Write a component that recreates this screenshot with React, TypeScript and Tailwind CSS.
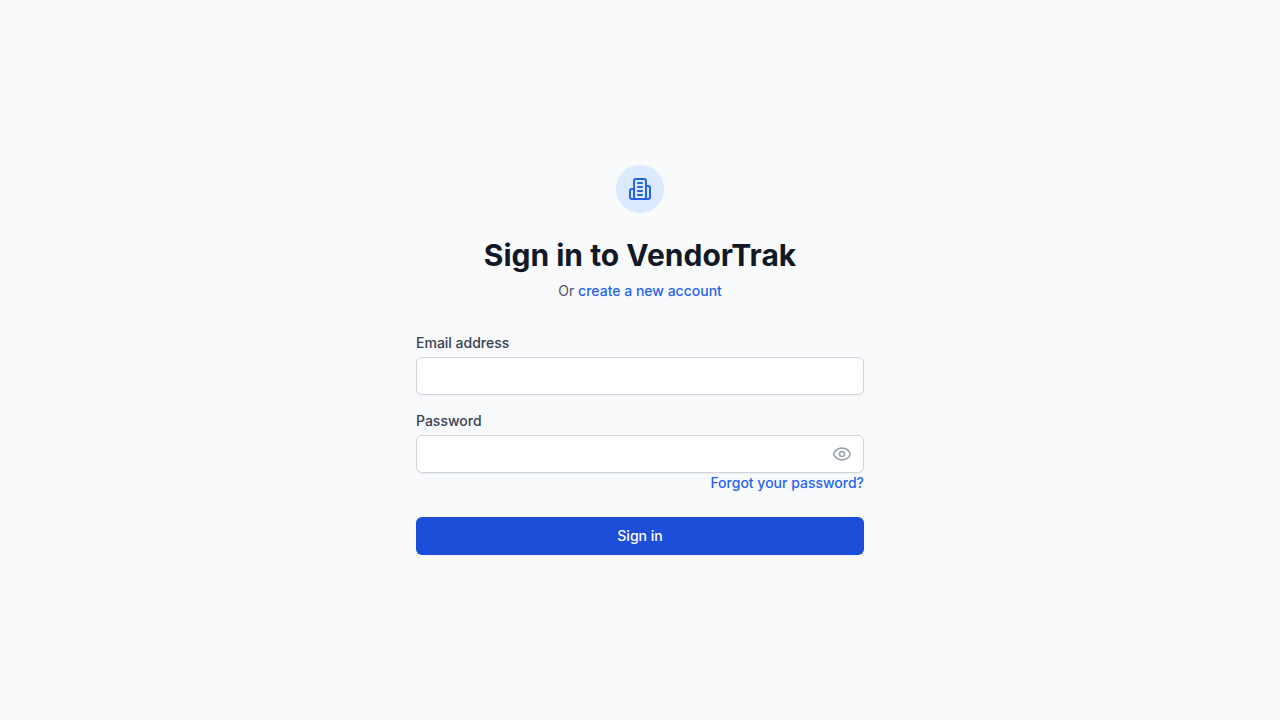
import { useState } from "react";
import { Eye, EyeOff } from "lucide-react";

const inputClass =
  "block w-full rounded-md border border-[#d1d5db] bg-white px-3 py-2 text-sm text-[#111827] shadow-xs focus:border-[#3b82f6] focus:outline-none";

function BuildingIcon() {
  return (
    <svg
      className="size-6 text-[#2563eb]"
      viewBox="0 0 24 24"
      fill="none"
      stroke="currentColor"
      strokeWidth="2"
      strokeLinecap="round"
      strokeLinejoin="round"
      aria-hidden="true"
    >
      <path d="M6 22V4a2 2 0 0 1 2-2h8a2 2 0 0 1 2 2v18Z" />
      <path d="M6 12H4a2 2 0 0 0-2 2v6a2 2 0 0 0 2 2h2" />
      <path d="M18 9h2a2 2 0 0 1 2 2v9a2 2 0 0 1-2 2h-2" />
      <path d="M10 6h4" />
      <path d="M10 10h4" />
      <path d="M10 14h4" />
      <path d="M10 18h4" />
    </svg>
  );
}

export default function App() {
  const [visible, setVisible] = useState(false);
  const Icon = visible ? EyeOff : Eye;

  return (
    <main className="flex min-h-screen flex-col items-center justify-center bg-[#f9fafb] px-4 py-12 font-['Inter',sans-serif] antialiased">
      <div className="w-full max-w-md">
        <header className="flex flex-col items-center text-center">
          <div className="flex size-12 items-center justify-center rounded-full bg-[#dbeafe]">
            <BuildingIcon />
          </div>
          <h1 className="mt-6 text-3xl font-bold text-[#111827]">Sign in to VendorTrak</h1>
          <p className="mt-2 text-sm text-[#4b5563]">
            Or{" "}
            <a href="#register" className="font-medium text-[#2563eb] hover:text-[#3b82f6]">
              create a new account
            </a>
          </p>
        </header>

        <form className="mt-8" onSubmit={(e) => e.preventDefault()}>
          <div>
            <label htmlFor="email" className="block text-sm font-medium text-[#374151]">
              Email address
            </label>
            <input id="email" type="email" autoComplete="email" className={`mt-1 ${inputClass}`} />
          </div>

          <div className="mt-4">
            <label htmlFor="password" className="block text-sm font-medium text-[#374151]">
              Password
            </label>
            <div className="relative mt-1">
              <input
                id="password"
                type={visible ? "text" : "password"}
                autoComplete="current-password"
                className={`pr-10 ${inputClass}`}
              />
              <button
                type="button"
                aria-label={visible ? "Hide password" : "Show password"}
                onClick={() => setVisible(!visible)}
                className="absolute inset-y-0 right-0 flex items-center pr-3 text-[#9ca3af]"
              >
                <Icon className="size-5" aria-hidden="true" />
              </button>
            </div>
          </div>

          <div className="flex justify-end text-sm">
            <a href="#reset" className="font-medium text-[#2563eb] hover:text-[#3b82f6]">
              Forgot your password?
            </a>
          </div>

          <button
            type="submit"
            className="mt-6 flex w-full justify-center rounded-md border border-transparent bg-[#1d4ed8] px-4 py-2 text-sm font-medium text-white shadow-xs"
          >
            Sign in
          </button>
        </form>
      </div>
    </main>
  );
}
